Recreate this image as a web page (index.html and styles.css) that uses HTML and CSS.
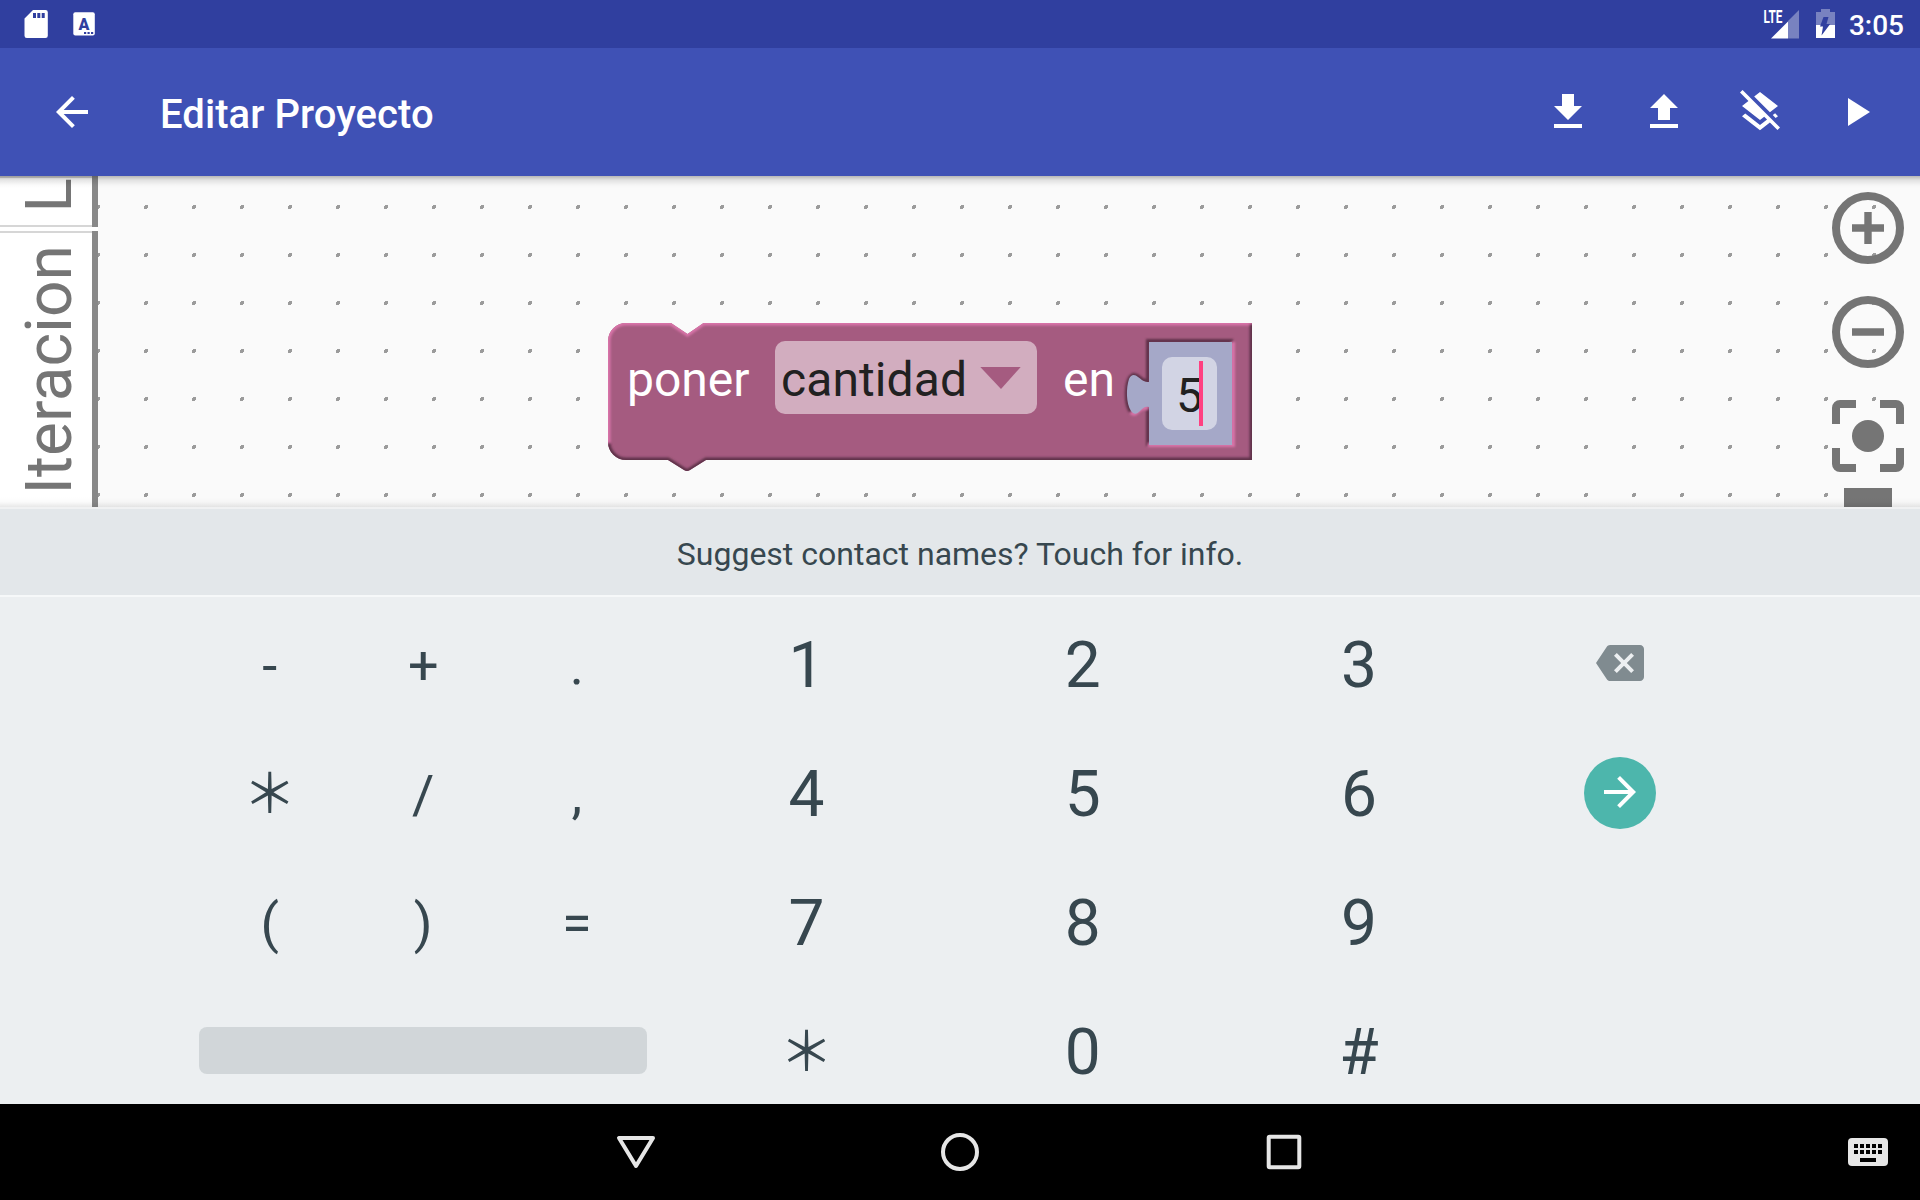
FILE: index.html
```html
<!DOCTYPE html>
<html lang="es">
<head>
<meta charset="utf-8">
<title>Editar Proyecto</title>
<link rel="stylesheet" href="styles.css">
</head>
<body>
<div class="screen">
  <header class="status">
    <svg class="status-left" width="100" height="48" viewBox="0 0 100 48">
      <path fill="#fff" d="M33 10h12.500a2.300 2.300 0 0 1 2.300 2.300v23.400a2.300 2.300 0 0 1-2.300 2.300h-18.700a2.300 2.300 0 0 1-2.300-2.300V18.500z"/>
      <path fill="#303f9f" d="M33 13h3v5h-3zM37.300 13h3v5h-3zM41.700 13h3v5h-3z"/>
      <rect x="73.300" y="12.300" width="21.500" height="23.300" rx="2" fill="#fff"/>
      <text class="badge-letter" x="83.900" y="29.500" text-anchor="middle">A</text>
      <path fill="#303f9f" d="M84 32h2.200v2H84zM87.500 32h2.200v2h-2.200zM91 32h2.200v2H91z"/>
    </svg>
    <div class="status-right">
      <svg width="84" height="48" viewBox="1760 0 84 48">
        <text class="lte" x="1763.500" y="22.700" textLength="19" lengthAdjust="spacingAndGlyphs">LTE</text>
        <path fill="#fff" fill-opacity=".35" d="M1799 10v28.500h-11V21z"/>
        <path fill="#fff" d="M1788 21.500v17h-17z"/>
        <path fill="#fff" fill-opacity=".35" d="M1821 9h9v3h5v13h-19V12h5z"/>
        <path fill="#fff" d="M1816 25h19v13h-19z"/>
        <path fill="#303f9f" d="M1823.500 17h5l-2 7h3.700l-8.700 11.500 1.500-9h-3z"/>
      </svg>
      <span class="clock">3:05</span>
    </div>
  </header>

  <nav class="toolbar">
    <svg class="icon" viewBox="0 0 24 24"><path d="M20 11H7.830l5.590-5.590L12 4l-8 8 8 8 1.410-1.410L7.830 13H20v-2z"/></svg>
    <h1 class="title">Editar Proyecto</h1>
    <div class="actions">
      <svg class="icon" viewBox="0 0 24 24"><path d="M19 9h-4V3H9v6H5l7 7 7-7zM5 18v2h14v-2H5z"/></svg>
      <svg class="icon" viewBox="0 0 24 24"><path d="M9 16h6v-6h4l-7-7-7 7h4zm-4 2h14v2H5z"/></svg>
      <svg class="icon" viewBox="0 0 24 24"><path d="M19.810 14.990l1.190-.92-1.430-1.430-1.190.92 1.430 1.430zm-.45-4.720L21 9l-9-7-2.910 2.270 7.870 7.880 2.400-1.880zM3.270 1L2 2.270l4.220 4.220L3 9l1.630 1.270L12 16l2.100-1.630 1.430 1.430L12 18.540l-7.370-5.730L3 14.070l9 7 4.950-3.850L20.730 21 22 19.730 3.270 1z"/></svg>
      <svg class="icon" viewBox="0 0 24 24"><path d="M8 5v14l11-7z"/></svg>
    </div>
  </nav>

  <main class="workspace">
    <svg class="canvas" width="1920" height="331" viewBox="0 176 1920 331">
      <defs>
        <pattern id="dots" x="96" y="205" width="48" height="48" patternUnits="userSpaceOnUse">
          <path fill="#9b9b9b" shape-rendering="crispEdges" d="M1 0h3v3h-1v1H0V1h1z"/>
        </pattern>
        <clipPath id="blockClip">
          <path d="M624 323H671L687.500 334 703.500 323H1252V460H706L690 470Q687 472 684 470L668 460H626A18 18 0 0 1 608 442V341A18 18 0 0 1 626 323z"/>
        </clipPath>
        <filter id="soft" x="-5%" y="-10%" width="110%" height="120%"><feGaussianBlur stdDeviation="1"/></filter>
      </defs>
      <rect x="96" y="157" width="1824" height="350" fill="url(#dots)"/>

      <g clip-path="url(#blockClip)">
        <rect x="600" y="315" width="660" height="165" fill="#a55b80"/>
        <g fill="none" stroke-width="5" filter="url(#soft)">
          <path stroke="#d873a8" d="M608 443V341A18 18 0 0 1 626 323H671L687.500 334 703.500 323H1252"/>
          <path stroke="#5e334a" d="M1252 324V460H706L690 470Q687 472 684 470L668 460H626A18 18 0 0 1 608 443"/>
          <path stroke="#5e334a" stroke-width="4" d="M1233 341H1148V382L1143 380C1139 378 1137 374 1133 375C1125 379 1125 404 1131 412"/>
          <path stroke="#5e334a" stroke-width="4" d="M1148 408V446"/>
          <path stroke="#d873a8" stroke-width="4" d="M1131 412Q1134 416 1138 411Q1142 407 1148 408M1148 445H1233V342"/>
        </g>
      </g>
      <path fill="#a5a8c8" d="M1149 342H1232V445H1149V407C1145 406 1143 408 1140 411C1137 414 1134 415 1131 411C1126 403 1126 388 1129 379C1131 374 1135 374 1138 377C1142 380 1144 382 1149 382z"/>
      <rect x="775" y="341" width="262" height="73" rx="10" fill="#d2adbf"/>
      <path fill="#a55b80" d="M980.300 367h40.400L1001 389z"/>
      <rect x="1162" y="357" width="55" height="73" rx="10" fill="#d2d4e4"/>
      <text class="label" x="627" y="396">poner</text>
      <text class="field" x="781" y="396" textLength="186">cantidad</text>
      <text class="label" x="1063" y="396">en</text>
      <text class="field" x="1176" y="412">5</text>
      <rect x="1199" y="361" width="4" height="65" fill="#ff4081"/>

      <g fill="none" stroke="#757575" stroke-width="8">
        <circle cx="1868" cy="228" r="32"/>
        <circle cx="1868" cy="332" r="32"/>
        <path stroke-width="7.400" d="M1852 228h32M1868 212v32M1852 332h32"/>
      </g>
      <g fill="#757575">
        <path d="M1832 424v-16a8 8 0 0 1 8-8h16v8h-16v16zM1880 400h16a8 8 0 0 1 8 8v16h-8v-16h-16zM1904 448v16a8 8 0 0 1-8 8h-16v-8h16v-16zM1856 472h-16a8 8 0 0 1-8-8v-16h8v16h16z"/>
        <circle cx="1868" cy="436" r="16"/>
        <path d="M1844 488h48v24h-48z"/>
      </g>
    </svg>
    <aside class="tabs">
      <div class="tab"><span>Logica</span></div>
      <div class="tab"><span>Iteracion</span></div>
    </aside>
  </main>

  <section class="keyboard">
    <div class="suggestion">Suggest contact names? Touch for info.</div>
    <div class="keys">
      <div class="symbols">
        <span>-</span><span>+</span><span>.</span>
        <span class="star">＊</span><span>/</span><span>,</span>
        <span>(</span><span>)</span><span>=</span>
        <div class="space"></div>
      </div>
      <div class="digits">
        <span>1</span><span>2</span><span>3</span>
        <span>4</span><span>5</span><span>6</span>
        <span>7</span><span>8</span><span>9</span>
        <span class="star">＊</span><span>0</span><span>#</span>
      </div>
      <div class="controls">
        <div class="control"><svg class="erase" viewBox="0 0 24 24"><path d="M22 3H7c-.69 0-1.230.35-1.590.88L0 12l5.410 8.110c.36.53.9.89 1.590.89h15c1.100 0 2-.9 2-2V5c0-1.100-.9-2-2-2zm-3 12.590L17.590 17 14 13.410 10.410 17 9 15.590 12.590 12 9 8.410 10.410 7 14 10.590 17.590 7 19 8.410 15.410 12 19 15.590z"/></svg></div>
        <div class="control"><div class="next"><svg class="icon" viewBox="0 0 24 24"><path d="M12 4l-1.410 1.410L16.170 11H4v2h12.170l-5.580 5.590L12 20l8-8z"/></svg></div></div>
      </div>
    </div>
  </section>

  <footer class="navbar">
    <svg class="nav-icon" viewBox="0 0 48 48"><path d="M7 10h34L24 38z"/></svg>
    <svg class="nav-icon" viewBox="0 0 48 48"><circle cx="24" cy="24" r="17"/></svg>
    <svg class="nav-icon" viewBox="0 0 48 48"><rect x="8.700" y="8.700" width="30.600" height="30.600" rx="1"/></svg>
    <svg class="ime" viewBox="0 0 40 28">
      <rect width="40" height="28" rx="4" fill="#e6e6e6"/>
      <path d="M6 6h4v4H6zM12 6h4v4h-4zM18 6h4v4h-4zM24 6h4v4h-4zM30 6h4v4h-4zM6 12h4v4H6zM12 12h4v4h-4zM18 12h4v4h-4zM24 12h4v4h-4zM30 12h4v4h-4zM12 20h16v4H12z"/>
    </svg>
  </footer>
</div>
</body>
</html>
```
FILE: styles.css
```css
* { box-sizing: border-box; }

body {
  margin: 0;
  font-family: Roboto, "Noto Sans CJK JP", sans-serif;
}

svg { display: block; flex: none; }

.screen {
  width: 1920px;
  height: 1200px;
  display: flex;
  flex-direction: column;
  overflow: hidden;
}

/* System status bar */
.status {
  height: 48px;
  flex: none;
  display: flex;
  justify-content: space-between;
  background: #303f9f;
  color: #fff;
}

.status-right { display: flex; padding-right: 16px; }

.badge-letter {
  font-size: 16px;
  font-weight: 900;
  fill: #303f9f;
}

.lte {
  font-size: 17.5px;
  font-weight: 700;
  fill: #fff;
}

.clock {
  width: 60px;
  text-align: right;
  font-size: 28px;
  font-weight: 500;
  line-height: 51px;
}

/* App toolbar */
.toolbar {
  height: 128px;
  flex: none;
  display: flex;
  align-items: center;
  padding: 0 40px 0 48px;
  background: #3f51b5;
  color: #fff;
}

.icon {
  width: 48px;
  height: 48px;
  fill: #fff;
}

.title {
  margin: 0 0 0 64px;
  padding-top: 5px;
  font-size: 40px;
  font-weight: 500;
  line-height: 48px;
  letter-spacing: .07px;
}

.actions {
  margin-left: auto;
  display: flex;
  gap: 48px;
}

/* Block workspace */
.workspace {
  height: 331px;
  flex: none;
  position: relative;
  overflow: hidden;
  background: #fafafa;
}

.canvas { position: absolute; inset: 0; }

.workspace::after {
  content: "";
  position: absolute;
  inset: 0;
  background:
    linear-gradient(rgba(0, 0, 0, .27), rgba(0, 0, 0, .1) 4px, rgba(0, 0, 0, .02) 9px, transparent 12px),
    linear-gradient(to top, rgba(0, 0, 0, .09), rgba(0, 0, 0, .02) 5px, transparent 10px);
}

.label, .field { font-size: 48px; }
.label { fill: #fff; }
.field { fill: #212121; }

.tabs {
  position: absolute;
  left: 0;
  top: 0;
  width: 98px;
  display: flex;
  flex-direction: column;
  gap: 4px;
  background: #fff;
}

.tab {
  height: 278px;
  display: flex;
  align-items: flex-end;
  padding: 0 0 14px 7.5px;
  background:
    linear-gradient(#888, #888) right / 6px 100% no-repeat,
    linear-gradient(#d6d6d6, #d6d6d6) top / 100% 2px no-repeat,
    linear-gradient(#d6d6d6, #d6d6d6) bottom / 100% 2px no-repeat;
  overflow: hidden;
}

.tab:first-child { height: 51px; }

.tab span {
  writing-mode: vertical-rl;
  transform: rotate(180deg);
  font-size: 64px;
  line-height: 84px;
  letter-spacing: .12px;
  color: #757575;
}

/* On-screen keyboard */
.keyboard {
  height: 597px;
  flex: none;
  display: flex;
  flex-direction: column;
  overflow: hidden;
  background: #eceff1;
  color: #37474f;
}

.suggestion {
  height: 90px;
  flex: none;
  border-top: 2px solid #f0f1f2;
  border-bottom: 2px solid #f6f8f9;
  background: #e3e7ea;
  font-size: 32px;
  line-height: 90px;
  text-align: center;
}

.keys {
  display: flex;
  padding: 4px 0 0 193px;
}

.symbols, .digits {
  display: grid;
  grid-template-rows: repeat(4, 129px);
  text-align: center;
}

.symbols {
  grid-template-columns: repeat(3, 153.5px);
  font-size: 54px;
  line-height: 129px;
}

.digits {
  grid-template-columns: repeat(3, 276.2px);
  margin-left: 15px;
  font-size: 64px;
  line-height: 130.4px;
}

.star {
  font-family: "Noto Sans CJK JP", sans-serif;
  font-size: 54px;
  line-height: 119.5px;
}

.space {
  grid-column: 1 / -1;
  height: 47px;
  margin: 39px 6.5px 0 6px;
  border-radius: 8px;
  background: #d1d6d9;
}

.controls { width: 245px; }

.control {
  height: 128.8px;
  display: flex;
  align-items: center;
  justify-content: center;
}

.erase {
  width: 48px;
  height: 48px;
  margin-bottom: 5px;
  fill: #808b90;
}

.next {
  width: 72px;
  height: 72px;
  padding: 11px 12px;
  margin-bottom: 3px;
  border-radius: 50%;
  background: #4db6ac;
}

/* System navigation bar */
.navbar {
  height: 96px;
  flex: none;
  display: flex;
  align-items: center;
  gap: 276px;
  padding: 0 32px 0 612px;
  background: #000;
}

.nav-icon {
  width: 48px;
  height: 48px;
  fill: none;
  stroke: #e6e6e6;
  stroke-width: 4px;
  stroke-linejoin: round;
}

.ime {
  width: 40px;
  height: 28px;
  margin-left: auto;
}
```
